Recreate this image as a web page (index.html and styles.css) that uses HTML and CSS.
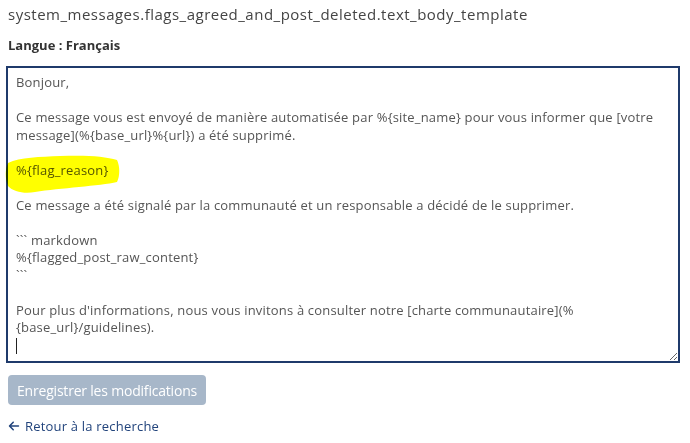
FILE: index.html
```html
<!DOCTYPE html>
<html lang="fr">
<head>
<meta charset="utf-8">
<title>Modèle de message</title>
<link rel="stylesheet" href="styles.css">
</head>
<body>
<h1 class="title">system_messages.flags_agreed_and_post_deleted.text_body_template</h1>
<div class="lang">Langue : Français</div>
<div class="editor">
<textarea class="body-input" spellcheck="false">Bonjour,

Ce message vous est envoyé de manière automatisée par %{site_name} pour vous informer que [votre message](%{base_url}%{url}) a été supprimé.

%{flag_reason}

Ce message a été signalé par la communauté et un responsable a décidé de le supprimer.

&#96;&#96;&#96; markdown
%{flagged_post_raw_content}
&#96;&#96;&#96;

Pour plus d'informations, nous vous invitons à consulter notre [charte communautaire](%{base_url}/guidelines).
</textarea>
<span class="caret"></span>
<svg class="marker" width="130" height="45" viewBox="0 0 130 45" aria-hidden="true">
<path d="M8 13 C 20 7, 40 7, 60 6 C 85 5, 105 6, 117 10 C 120 16, 120 26, 117 32 C 100 36, 60 38, 35 42 C 25 44, 13 42, 8 36 C 5 28, 5 20, 8 13 Z" fill="#ffff00"/>
</svg>
</div>
<button class="save" type="button">Enregistrer les modifications</button>
<a class="back" href="#"><svg class="arrow" width="12" height="12" viewBox="0 0 448 512" aria-hidden="true"><path d="M9.4 233.4c-12.5 12.5-12.5 32.8 0 45.3l160 160c12.5 12.5 32.8 12.5 45.3 0s12.5-32.8 0-45.3L109.2 288 416 288c17.7 0 32-14.3 32-32s-14.3-32-32-32l-306.7 0L214.6 118.6c12.5-12.5 12.5-32.8 0-45.3s-32.8-12.5-45.3 0l-160 160z" fill="currentColor"/></svg>Retour à la recherche</a>
</body>
</html>
```
FILE: styles.css
```css
html, body { background: #fff; }
body {
  margin: 0;
  padding: 4px 8px 0;
  font-family: "Open Sans", "Liberation Sans", sans-serif;
  color: #444;
}
.title {
  margin: 0;
  font-size: 15px;
  font-weight: normal;
  line-height: 20px;
  letter-spacing: 0.5px;
  color: #444;
  white-space: nowrap;
}
.lang {
  margin-top: 12px;
  font-size: 13px;
  font-weight: bold;
  line-height: 18px;
  color: #333;
}
.editor {
  position: relative;
  margin: 12px 0 0 -2px;
  width: 674px;
  height: 297px;
}
.body-input {
  display: block;
  box-sizing: border-box;
  width: 674px;
  height: 297px;
  margin: 0;
  padding: 6px 8px;
  border: 2px solid #1f3a6b;
  border-radius: 0;
  outline: none;
  font-family: "Open Sans", "Liberation Sans", sans-serif;
  font-size: 13px;
  line-height: 17.5px;
  letter-spacing: 0.18px;
  color: #555;
  background: #fff;
  resize: vertical;
}
.caret {
  position: absolute;
  left: 10px;
  top: 272px;
  width: 1px;
  height: 16px;
  background: #222;
}
.marker {
  position: absolute;
  left: -6px;
  top: 84px;
  mix-blend-mode: multiply;
  pointer-events: none;
}
.save {
  display: block;
  margin-top: 12px;
  height: 30px;
  padding: 0 9px;
  border: 0;
  border-radius: 4px;
  background: #a7b7c9;
  color: #fff;
  font-family: "Open Sans", "Liberation Sans", sans-serif;
  font-size: 14px;
  letter-spacing: -0.2px;
}
.back {
  display: flex;
  align-items: center;
  gap: 5px;
  margin-top: 12px;
  font-size: 13px;
  line-height: 18px;
  letter-spacing: 0.2px;
  color: #22447c;
  text-decoration: none;
}
.arrow { flex: none; }
```
